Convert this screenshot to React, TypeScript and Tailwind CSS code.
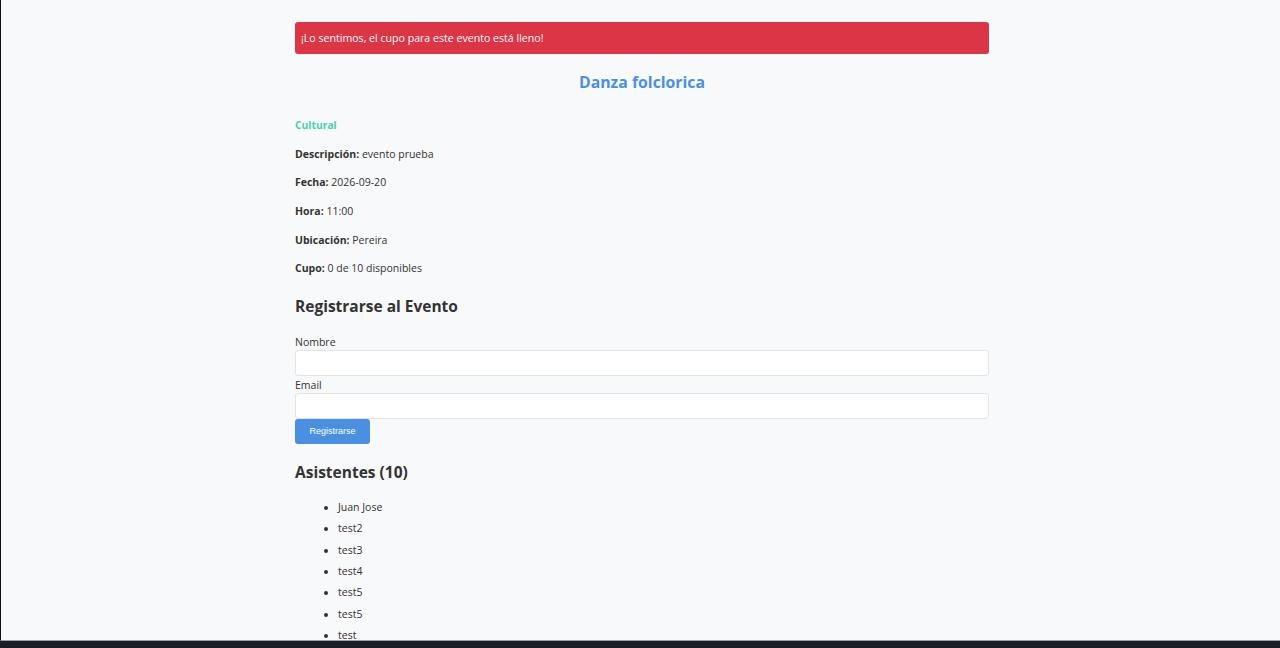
const asistentes = ["Juan Jose", "test2", "test3", "test4", "test5", "test5", "test"];

function Dato({ label, value }: { label: string; value: string }) {
  return (
    <p className="h-[28.7px] leading-[28.7px]">
      <strong className="font-bold">{label}:</strong> {value}
    </p>
  );
}

export default function App() {
  return (
    <div className="h-[648px] overflow-hidden bg-[#1b1e25] font-['Open_Sans',sans-serif] text-[#333]">
      <div className="h-[641px] overflow-hidden border-l border-[#111] border-b border-b-[#9aa0a6] bg-[#f8f9fa]">
        <div className="ml-[294px] w-[694px] pt-[22px] text-[10.5px]">
          <div className="h-[32px] rounded-[3px] bg-[#dc3545] px-[6px] text-[10.6px] leading-[32px] text-white">
            ¡Lo sentimos, el cupo para este evento está lleno!
          </div>

          <h1 className="mt-[16px] text-center text-[15.8px] font-bold leading-[24px] text-[#4a90e2]">
            Danza folclorica
          </h1>

          <div className="mt-[17px]">
            <p className="h-[28.7px] text-[10.3px] font-bold leading-[28.7px] text-[#48d1b0]">Cultural</p>
            <Dato label="Descripción" value="evento prueba" />
            <Dato label="Fecha" value="2026-09-20" />
            <Dato label="Hora" value="11:00" />
            <Dato label="Ubicación" value="Pereira" />
            <Dato label="Cupo" value="0 de 10 disponibles" />
          </div>

          <h2 className="mt-[11px] text-[15.5px] font-bold leading-[24px]">Registrarse al Evento</h2>

          <form className="mt-[16px]">
            <label className="block leading-[16px]">Nombre</label>
            <input className="block h-[26px] w-full rounded-[3px] border border-[#e2e4e7] bg-white" />
            <label className="mt-[1px] block leading-[16px]">Email</label>
            <input className="block h-[26px] w-full rounded-[3px] border border-[#e2e4e7] bg-white" />
            <button
              type="button"
              className="h-[25px] w-[75px] rounded-[3px] bg-[#4a90e2] font-['Liberation_Sans',sans-serif] text-[9px] text-white"
            >
              Registrarse
            </button>
          </form>

          <h2 className="mt-[16px] text-[15.5px] font-bold leading-[24px]">Asistentes (10)</h2>

          <ul className="mt-[13px] list-disc pl-[43px]">
            {asistentes.map((a, i) => (
              <li key={i} className="h-[21.3px] leading-[21.3px]">
                {a}
              </li>
            ))}
          </ul>
        </div>
      </div>
    </div>
  );
}
